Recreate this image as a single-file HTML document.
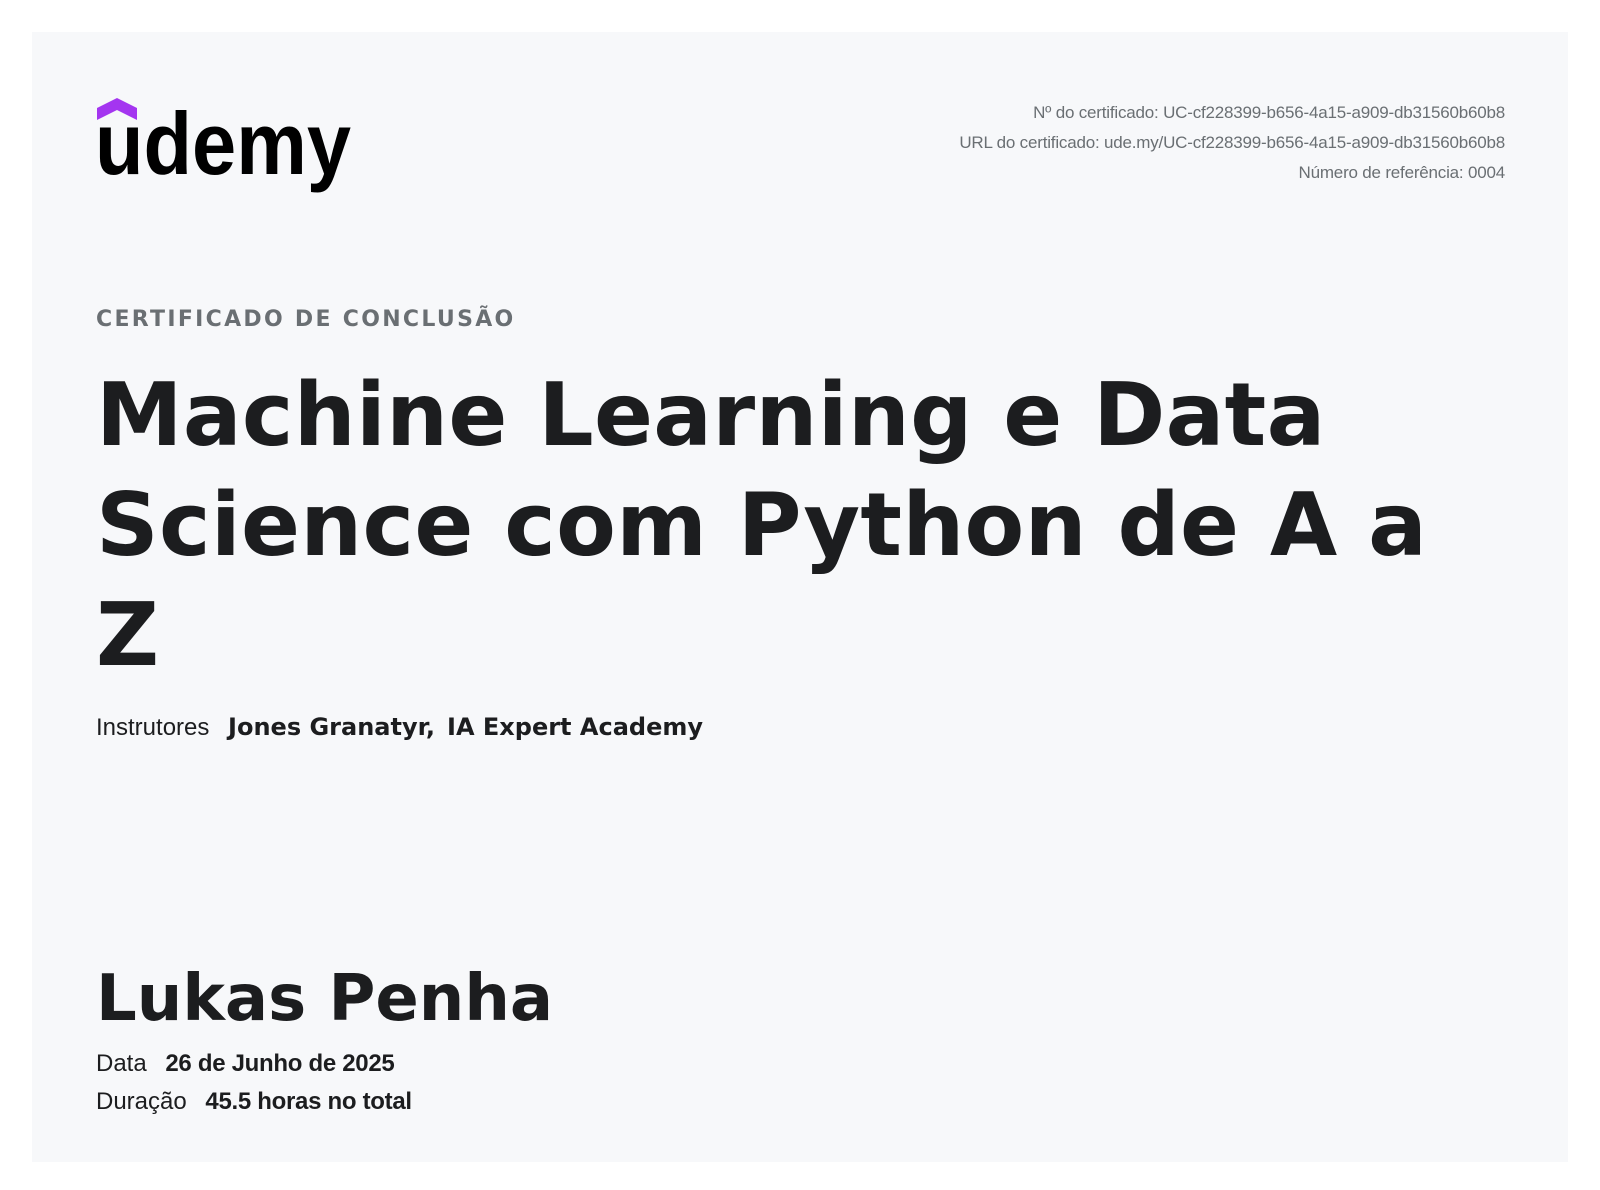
<!DOCTYPE html>
<html><head><meta charset="utf-8"><style>
html,body{margin:0;padding:0;background:#fff;width:1600px;height:1190px;overflow:hidden}
.card{position:absolute;left:32px;top:32px;width:1536px;height:1130px;background:#f7f8fa}
.a{position:absolute;white-space:nowrap}
.meta{right:63px;top:66px;text-align:right;font:17px/30px "Liberation Sans",sans-serif;color:#6a6f73;letter-spacing:-0.2px}
.cap{left:64px;top:275px;font:bold 22px "DejaVu Sans",sans-serif;color:#6a6f73;letter-spacing:2.3px}
.title{position:absolute;left:64px;top:328px;width:1380px;font:bold 87px/110px "DejaVu Sans",sans-serif;color:#1c1d1f;letter-spacing:0.3px}
.inst{left:64px;top:681px;font:24px "Liberation Sans",sans-serif;color:#1c1d1f}
.inst b{font-family:"DejaVu Sans",sans-serif;font-size:24px;margin-left:12px}
.name{left:64px;top:930px;font:bold 64px "DejaVu Sans",sans-serif;color:#1c1d1f}
.d{left:64px;font:24px "Liberation Sans",sans-serif;color:#1c1d1f}
.d b{margin-left:12px;letter-spacing:-0.3px}
</style></head><body>
<div class="card">
<svg class="a" style="left:63px;top:64px" width="280" height="110" viewBox="0 0 280 110">
<path d="M2,24 L2,12 L22,2 L42,12 L42,24 L22,14 Z" fill="#a435f0"/>
<text x="0" y="78" font-family="Liberation Sans,sans-serif" font-weight="bold" font-size="88" textLength="256" lengthAdjust="spacingAndGlyphs" fill="#000">udemy</text>
</svg>
<div class="a meta">Nº do certificado: UC-cf228399-b656-4a15-a909-db31560b60b8<br>URL do certificado: ude.my/UC-cf228399-b656-4a15-a909-db31560b60b8<br>Número de referência: 0004</div>
<div class="a cap">CERTIFICADO DE CONCLUSÃO</div>
<div class="title">Machine Learning e Data Science com Python de A a Z</div>
<div class="a inst">Instrutores <b>Jones Granatyr,</b><b>IA Expert Academy</b></div>
<div class="a name">Lukas Penha</div>
<div class="a d" style="top:1018px">Data <b>26 de Junho de 2025</b></div>
<div class="a d" style="top:1056px">Duração <b>45.5 horas no total</b></div>
</div>
</body></html>
